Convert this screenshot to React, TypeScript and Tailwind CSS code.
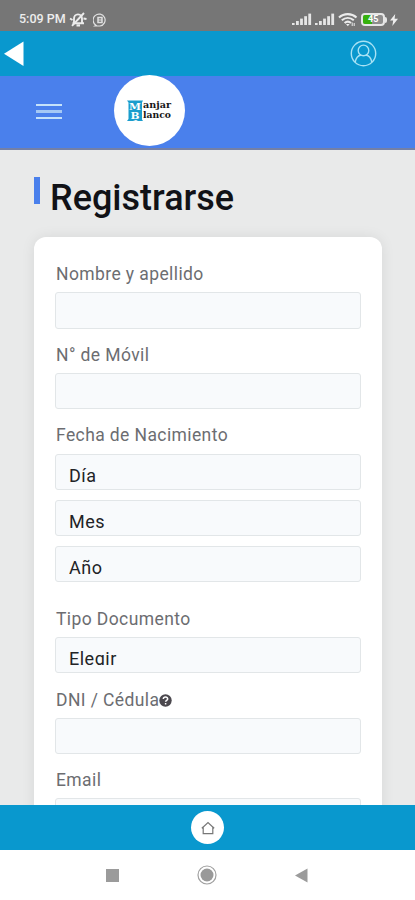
type FieldProps = {
  label: string;
  options?: string[];
  help?: boolean;
  className?: string;
};

const SignalIcon = () => (
  <svg width="20" height="13" viewBox="0 0 20 13" fill="#e6e6e6">
    <rect x="0" y="10" width="2.6" height="2" />
    <rect x="4" y="8" width="2.8" height="4" />
    <rect x="8.1" y="5.6" width="2.8" height="6.4" />
    <rect x="12.2" y="3.2" width="2.8" height="8.8" />
    <rect x="16.3" y="0.6" width="2.8" height="11.4" />
  </svg>
);

const StatusBar = () => (
  <div className="flex h-[31px] shrink-0 items-center bg-[#767676] pl-[19px] pr-[17px] pt-[8px] text-[#ededed]">
    <span className="w-[49px] whitespace-nowrap text-[12.5px] font-medium leading-none">5:09 PM</span>

    {/* Muted bell */}
    <svg className="ml-[1px]" width="18" height="15" viewBox="0 0 18 15" fill="none" stroke="#ececec" strokeWidth="1.9">
      <path d="M5 10.8V6.8C5 4.2 6.5 2.4 9 2.4s4 1.8 4 4.4v4M3.5 11.2H15M7.5 13.5H11" />
      <path d="M15 1L3 13.8M1 6.5L3.5 8M14.5 6.5l3 .5" />
    </svg>

    {/* Rounded badge */}
    <svg className="ml-[6px]" width="14" height="14" viewBox="0 0 14 14" fill="none" stroke="#e0e0e0" strokeWidth="1.2">
      <path d="M3 12.2A6 6 0 1 1 7 13H1.8z" />
      <rect x="5" y="4.5" width="4" height="5" strokeWidth="1.5" />
      <path d="M5 7h4" strokeWidth="1" />
    </svg>

    <div className="ml-auto flex items-center">
      <SignalIcon />
      <span className="w-[3px]" />
      <SignalIcon />
      <svg className="ml-[3px]" width="20" height="14" viewBox="0 0 20 14" fill="none" stroke="#ececec" strokeWidth="2.1">
        <path d="M1 4.6C6 0 13.5 0 18.5 4.6M3.8 7.3c3.6-3.1 8.4-3.1 12 0M6.6 10c2-1.7 4.4-1.7 6.4 0" />
        <path d="M8 11h3.6l-1.8 2.2z" stroke="none" fill="#ececec" />
        <path d="M14.2 9.5V13M16.2 10v3" strokeWidth="1" />
      </svg>
      <div className="ml-[3px] flex h-[13px] w-[24px] items-center rounded-[4px] border-2 border-[#e6e6e6] bg-[#8d8d8d]">
        <div className="flex h-full w-[9px] items-center rounded-l-[2px] bg-[#35b10c]">
          <span className="pl-[5px] text-[9px] font-bold leading-none text-white">45</span>
        </div>
      </div>
      <div className="h-[6px] w-[2px] rounded-r bg-[#e6e6e6]" />
      <svg className="ml-[3px]" width="8" height="12" viewBox="0 0 8 12" fill="#eeeeee">
        <path d="M5.2 0L0 6.6h3.2L2.3 12 8 4.8H4.6z" />
      </svg>
    </div>
  </div>
);

const AppBar = () => (
  <div className="flex h-[45px] shrink-0 items-center justify-between bg-[#0998ce] pl-[4px] pr-[38px]">
    <svg width="20" height="26" viewBox="0 0 20 26" fill="white">
      <path d="M0 12.7L19.5 0.5v24.5z" />
    </svg>
    <svg width="27" height="27" viewBox="0 0 27 27" fill="none" stroke="#a8e2f4" strokeWidth="1.4">
      <circle cx="13.5" cy="13.5" r="12.2" />
      <circle cx="13.5" cy="10.4" r="5.3" />
      <path d="M5.2 22.4c.7-4.6 3.2-7 6-7.4M21.8 22.4c-.7-4.6-3.2-7-6-7.4" />
    </svg>
  </div>
);

const Logo = () => (
  <div className="flex size-[71px] items-center justify-center rounded-full bg-white">
    <svg width="48" height="24" viewBox="0 0 48 24" fontFamily="'DejaVu Serif', serif" fontWeight="bold">
      <path d="M1 1.5h16l-1 2v17l1 1.5h-5l-2-1-3 1H1l1.5-2V3.5z" fill="#1a9dcd" />
      <text x="3" y="10.5" fontSize="10" fill="white" textLength="12" lengthAdjust="spacingAndGlyphs">M</text>
      <text x="4.5" y="20" fontSize="10" fill="white" textLength="9" lengthAdjust="spacingAndGlyphs">B</text>
      <text x="17" y="9" fontSize="8.5" fill="#161616" textLength="28" lengthAdjust="spacingAndGlyphs">anjar</text>
      <text x="17" y="18.5" fontSize="8.5" fill="#161616" textLength="28" lengthAdjust="spacingAndGlyphs">lanco</text>
    </svg>
  </div>
);

const Navbar = () => (
  <div className="flex h-[74px] shrink-0 items-start border-b-2 border-[#7480a6] bg-[#4a80ec] pl-[36px]">
    <button className="mt-[28px] flex w-[26px] flex-col gap-[4px]" aria-label="Menu">
      <span className="h-[2px] bg-[#c5e2fa]" />
      <span className="h-[3px] bg-[#a4c8f5]" />
      <span className="h-[2px] bg-[#c5e2fa]" />
    </button>
    <div className="-mt-px ml-[52px]">
      <Logo />
    </div>
  </div>
);

const Field = ({ label, options = [], help, className = "" }: FieldProps) => (
  <div className={className}>
    <div className="mb-[6px] flex h-6 items-center whitespace-nowrap pl-px text-[17.5px] tracking-[0.4px] text-[#6c6d71]">
      {label}
      {help && (
        <svg width="13" height="13" viewBox="0 0 13 13" className="mt-[2px]">
          <circle cx="6.5" cy="6.5" r="6.2" fill="#4b484e" />
          <path d="M4.3 5c.2-2.7 4.5-2.5 4.4 0 0 1.4-2.1 1.4-2.1 2.8M6.6 9v1.5" fill="none" stroke="white" strokeWidth="1.5" />
        </svg>
      )}
    </div>
    <div className="flex flex-col gap-[9.5px]">
      {options.length === 0 && <div className="h-[36.5px] rounded-[3px] border border-[#e2e6e8] bg-[#f8fafc]" />}
      {options.map((option) => (
        <div key={option} className="h-[36.5px] rounded-[3px] border border-[#e2e6e8] bg-[#f8fafc] px-[13px] pt-[9px]">
          <div className="h-[18px] overflow-hidden text-[18px] leading-[23px] tracking-[0.5px] text-[#222326]">{option}</div>
        </div>
      ))}
    </div>
  </div>
);

const App = () => {
  return (
    <div className="flex h-[900px] w-[415px] flex-col overflow-hidden bg-white font-['Roboto',sans-serif]">
      <StatusBar />
      <AppBar />
      <Navbar />

      <main className="min-h-0 flex-1 overflow-hidden bg-[#e9eaea] pl-[34px] pr-[33px]">
        <div className="flex h-[87px] pt-[27px]">
          <div className="h-[27px] w-[6px] bg-[#4a80ec]" />
          <h1 className="ml-[10px] text-[36px] font-medium leading-[42px] text-[#111217]">Registrarse</h1>
        </div>

        <div className="h-[700px] rounded-[12px] bg-white px-[21px] pt-[25px] shadow-[0_0_14px_rgba(0,0,0,0.08)]">
          <Field label="Nombre y apellido" />
          <Field label="N° de Móvil" className="mt-[14.3px]" />
          <Field label="Fecha de Nacimiento" options={["Día", "Mes", "Año"]} className="mt-[14.3px]" />
          <Field label="Tipo Documento" options={["Elegir"]} className="mt-[24.8px]" />
          <Field label="DNI / Cédula" help className="mt-[14.3px]" />
          <Field label="Email" className="mt-[14.3px]" />
        </div>
      </main>

      {/* Bottom bar */}
      <div className="flex h-[45px] shrink-0 items-center justify-center bg-[#0998ce]">
        <div className="flex size-[33px] items-center justify-center rounded-full bg-white">
          <svg width="14" height="14" viewBox="0 0 14 14" fill="none" stroke="#777777" strokeWidth="1.2">
            <path d="M2.2 12.6V6L7 1.5 11.8 6v6.6zM.8 7.2L2.2 6M13.2 7.2L11.8 6" />
          </svg>
        </div>
      </div>

      {/* System navigation */}
      <div className="flex h-[50px] shrink-0 items-center justify-between bg-white pl-[106px] pr-[107px]">
        <div className="size-[13px] bg-[#9b9b9b]" />
        <svg width="20" height="20" viewBox="0 0 20 20">
          <circle cx="10" cy="10" r="9" fill="none" stroke="#a0a0a0" strokeWidth="1.2" />
          <circle cx="10" cy="10" r="6.5" fill="#999999" />
        </svg>
        <svg width="13" height="15" viewBox="0 0 13 15" fill="#9b9b9b">
          <path d="M0 7.5L12.5 0.5v14z" />
        </svg>
      </div>
    </div>
  );
};

export default App;
